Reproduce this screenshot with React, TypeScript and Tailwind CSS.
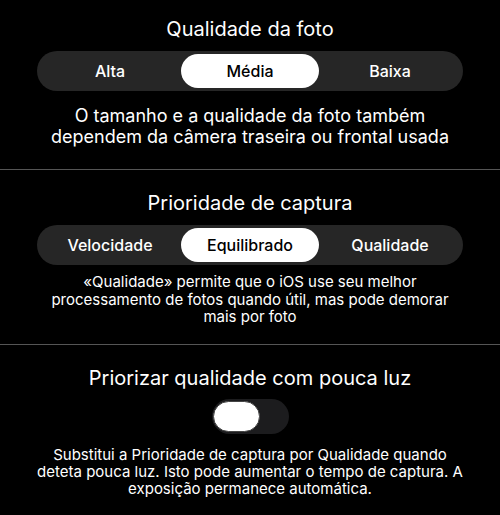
import { useState } from 'react'

const font = { fontFamily: 'Inter, "Noto Sans", sans-serif' }

function Segmented({ options, value }: { options: string[]; value: number }) {
  return (
    <div className="mx-[37px] h-10 rounded-full bg-[#262626] p-[3px] grid grid-cols-3">
      {options.map((o, i) => (
        <div
          key={o}
          className={
            'flex items-center justify-center rounded-full text-[16px] font-medium ' +
            (i === value ? 'bg-white text-black mx-[1px]' : 'text-white')
          }
        >
          {o}
        </div>
      ))}
    </div>
  )
}

export default function App() {
  const [on] = useState(false)
  return (
    <div className="w-[500px] h-[515px] bg-black text-white overflow-hidden" style={font}>
      <div className="pt-[15px] pb-[22px]">
        <h2 className="text-center text-[20px] leading-[28px]">Qualidade da foto</h2>
        <div className="mt-2">
          <Segmented options={['Alta', 'Média', 'Baixa']} value={1} />
        </div>
        <p className="mt-[14px] text-center text-[18px] leading-[21px] px-10">
          O tamanho e a qualidade da foto também dependem da câmera traseira ou frontal usada
        </p>
      </div>
      <div className="h-px bg-[#555]" />
      <div className="pt-[19px] pb-[18px]">
        <h2 className="text-center text-[20px] leading-[28px]">Prioridade de captura</h2>
        <div className="mt-2">
          <Segmented options={['Velocidade', 'Equilibrado', 'Qualidade']} value={1} />
        </div>
        <p className="mt-2 text-center text-[15px] leading-[17.5px] px-12">
          «Qualidade» permite que o iOS use seu melhor processamento de fotos quando útil, mas pode demorar mais por foto
        </p>
      </div>
      <div className="h-px bg-[#555]" />
      <div className="pt-[19px]">
        <h2 className="text-center text-[20px] leading-[28px]">Priorizar qualidade com pouca luz</h2>
        <div className="mt-[7px] flex justify-center">
          <div className="w-[77px] h-[35px] rounded-full bg-[#1c1c1e] flex items-center pl-[1px]">
            <div className={'w-[47px] h-[31px] rounded-full bg-white border border-[#444] ' + (on ? 'ml-auto' : '')} />
          </div>
        </div>
        <p className="mt-[12px] text-center text-[15px] leading-[17px] px-[34px]">
          Substitui a Prioridade de captura por Qualidade quando deteta pouca luz. Isto pode aumentar o tempo de captura. A exposição permanece automática.
        </p>
      </div>
    </div>
  )
}
